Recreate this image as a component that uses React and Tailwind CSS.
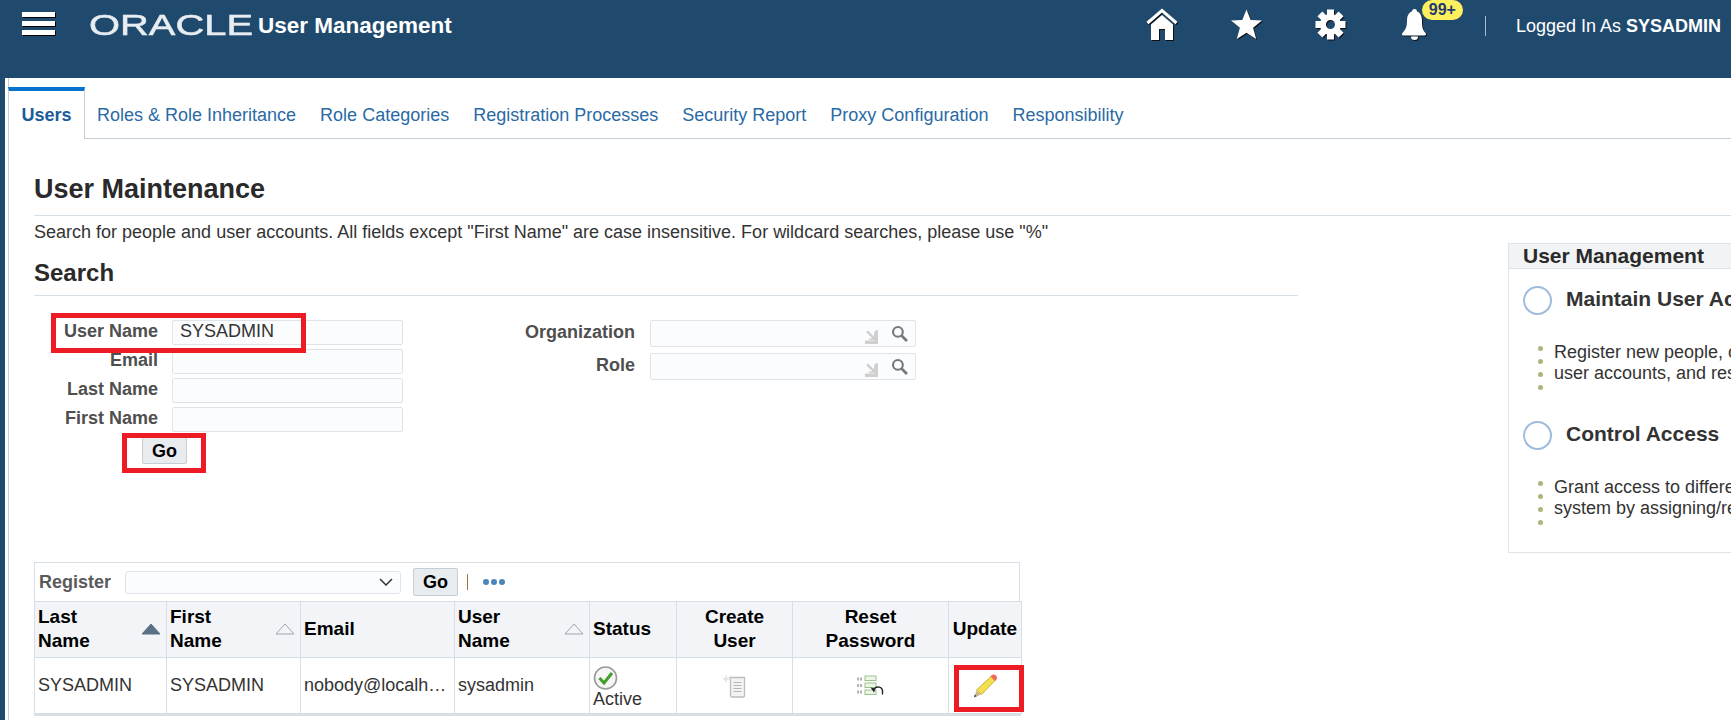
import React from "react";

const tabs = ["Roles & Role Inheritance", "Role Categories", "Registration Processes", "Security Report", "Proxy Configuration", "Responsibility"];

function HomeIcon() {
  return (
    <svg width="32" height="33" viewBox="0 0 32 33" className="drop-shadow-[1px_1px_0_#111]">
      <path d="M1.500 15L16 2.500 30.500 15" fill="none" stroke="#fff" strokeWidth="3" />
      <path d="M5 16.500L16 7l11 9.500V32h-8V21h-6v11H5z" fill="#fff" />
    </svg>
  );
}

function StarIcon() {
  return (
    <svg width="31" height="31" viewBox="0 0 31 31" className="drop-shadow-[1px_1px_0_#111]">
      <path d="M15.500 0.500l4.200 10.500 11.300 0.500-8.900 7.200 3.100 11.300-9.700-6.300-9.700 6.300 3.100-11.300L0 11.500l11.300-0.500z" fill="#fff" />
    </svg>
  );
}

function GearIcon() {
  return (
    <svg width="31" height="31" viewBox="0 0 31 31" className="drop-shadow-[1px_1px_0_#111]">
      <circle cx="15.500" cy="15.500" r="7.500" fill="none" stroke="#fff" strokeWidth="6" />
      {[0, 45, 90, 135, 180, 225, 270, 315].map((a) => (
        <rect key={a} x="12" y="0.500" width="7" height="6" fill="#fff" transform={`rotate(${a} 15.500 15.500)`} />
      ))}
    </svg>
  );
}

function BellIcon() {
  return (
    <svg width="27" height="31" viewBox="0 0 27 31" className="drop-shadow-[1px_1px_0_#111]">
      <circle cx="13.500" cy="2.500" r="2.500" fill="#fff" />
      <path d="M13.500 2C8 2 6 6.500 6 12c0 6-1.500 8.500-4.500 12-1 1.500-.5 2.500 1 2.500h21c1.500 0 2-1 1-2.500C21.500 20.500 21 18 21 12c0-5.500-2-10-7.500-10z" fill="#fff" />
      <path d="M10 27.500a3.500 3.500 0 0 0 7 0z" fill="#fff" />
    </svg>
  );
}

function SearchIcon() {
  return (
    <svg width="17" height="17" viewBox="0 0 16 16" fill="none" stroke="#777" strokeWidth="2">
      <circle cx="6.500" cy="6.500" r="4.600" />
      <path d="M10 10l5 5" strokeWidth="2.600" />
    </svg>
  );
}

function LovArrow() {
  return (
    <svg width="14" height="14" viewBox="0 0 14 14" fill="#cfcfcf">
      <path d="M0 10.500h9.500V1l3.500-1v14H0z" />
      <path d="M1 2l2-1.500 6 6V3.500h1.500V10H4V8.500h3.500z" />
    </svg>
  );
}

function Field({ label, value }) {
  return (
    <div className="flex items-center h-[29px]">
      <label className="w-[124px] -mt-[2px] text-right font-bold text-[18px] text-[#4f4f4f] whitespace-nowrap">{label}</label>
      <div className="ml-[14px] w-[231px] h-[25px] rounded-[2px] border border-[#dfe4ea] bg-[#fbfcfe] pl-[7px] text-[18px] leading-[21px] text-[#333]">{value}</div>
    </div>
  );
}

function LovField({ label }) {
  return (
    <div className="flex items-center h-[33px]">
      <label className="w-[139px] -mt-[2px] text-right font-bold text-[18px] text-[#4f4f4f]">{label}</label>
      <div className="ml-[15px] w-[266px] h-[27px] rounded-[2px] border border-[#dfe4ea] bg-[#fbfcfe] flex items-center justify-end gap-[12px] pr-[7px]">
        <span className="mt-[7px] flex"><LovArrow /></span>
        <SearchIcon />
      </div>
    </div>
  );
}

function SortUp({ filled }) {
  return (
    <svg width="20" height="12" viewBox="0 0 20 12" className="shrink-0">
      <path d="M10 1L19 11H1z" fill={filled ? "#5a7087" : "#f2f4f8"} stroke={filled ? "#5a7087" : "#9aa7b2"} strokeWidth="1" />
    </svg>
  );
}

function CheckIcon() {
  return (
    <svg width="25" height="24" viewBox="0 0 25 24">
      <circle cx="12.500" cy="12" r="11" fill="#f6f6f6" stroke="#9a9a9a" strokeWidth="1.600" />
      <path d="M6.500 12l4.500 5 8-10" fill="none" stroke="#3f9e2a" strokeWidth="3" />
    </svg>
  );
}

function CreateIcon() {
  return (
    <svg width="25" height="25" viewBox="0 0 25 25" fill="none">
      <path d="M4 1.500l1.300 3 3 1.200-3 1.300L4 10 2.800 7 0 5.700l3-1.200z" fill="#e4e4e4" />
      <path d="M8 4.500h14.500v18.500a1 1 0 0 1-1 1H10a1.500 1.500 0 0 1-1.500-1.500V8z" fill="#f3f3f3" stroke="#bdbdbd" strokeWidth="1.300" />
      <path d="M11.500 9.500h8M11.500 12.500h8M11.500 15.500h8M11.500 18.500h8" stroke="#b5b5b5" strokeWidth="1.200" />
    </svg>
  );
}

function ResetIcon() {
  return (
    <svg width="27" height="22" viewBox="0 0 27 22" fill="none">
      <path d="M1 2.500v3M4 2.500v3M1 9v3M4 9v3M1 15.500v3M4 15.500v3" stroke="#8a8a8a" strokeWidth="1.300" />
      <rect x="8" y="1" width="11" height="4.500" fill="#eef5e6" stroke="#9cc08a" />
      <rect x="8" y="8" width="11" height="4.500" fill="#eef5e6" stroke="#9cc08a" />
      <rect x="8" y="15" width="11" height="4.500" fill="#eef5e6" stroke="#9cc08a" />
      <path d="M17 14.500a4.500 4.500 0 0 1 8.500 2.500v2.500" stroke="#222" strokeWidth="1.400" />
      <path d="M13.500 12.500l5 1-1.500 4z" fill="#222" />
    </svg>
  );
}

function PencilIcon() {
  return (
    <svg width="25" height="25" viewBox="0 0 25 25">
      <path d="M18.500 3l4 4L8.500 21.500 3.500 17z" fill="#f4e04d" stroke="#b8a32c" strokeWidth="0.800" />
      <path d="M18.500 2.500a2.800 2.800 0 0 1 4.500 4.500l-1 1-4.500-4.500z" fill="#ee6a5a" />
      <path d="M3.500 17.500l4.500 4-7 3z" fill="#c9b98a" />
      <path d="M1.800 21.500l2 1.700-2.800 1z" fill="#444" />
    </svg>
  );
}

function Th({ children, className = "" }) {
  return <th className={"border border-[#d6dfe6] bg-[#f2f4f8] px-[3px] pb-[2px] text-[19px] leading-[24px] font-bold text-black align-middle " + className}>{children}</th>;
}

function Td({ children, className = "" }) {
  return <td className={"border border-[#d6dfe6] px-[3px] text-[18px] text-[#333] align-middle " + className}>{children}</td>;
}

function Bullets() {
  return (
    <div className="flex flex-col gap-[8px] pt-[4px] w-[5px] shrink-0">
      {[0, 1, 2, 3].map((i) => <span key={i} className="w-[5px] h-[5px] rounded-full bg-[#a9b77a]" />)}
    </div>
  );
}

function Section({ title, line1, line2, top }) {
  return (
    <div className={top}>
      <div className="flex items-center gap-[14px] pl-[14px]">
        <span className="w-[29px] h-[29px] rounded-full border-2 border-[#9dbcdc]" />
        <span className="font-bold text-[21px] leading-[24px] -mt-[4px] text-[#333] whitespace-nowrap">{title}</span>
      </div>
      <div className="flex gap-[11px] pl-[29px] mt-[27px]">
        <Bullets />
        <div className="text-[18px] leading-[21px] text-[#333] whitespace-nowrap">
          <div>{line1}</div>
          <div>{line2}</div>
        </div>
      </div>
    </div>
  );
}

export default function App() {
  return (
    <div className="w-[1731px] h-[720px] overflow-hidden flex flex-col bg-white font-['Liberation_Sans',Arial,sans-serif]">
      <header className="h-[78px] shrink-0 bg-[#1f4a6e] flex items-start text-white">
        <div className="ml-[22px] mt-[12px] w-[33px] flex flex-col gap-[4px]">
          <span className="h-[5px] bg-white shadow-[1px_1px_0_#000]" />
          <span className="h-[5px] bg-white shadow-[1px_1px_0_#000]" />
          <span className="h-[5px] bg-white shadow-[1px_1px_0_#000]" />
        </div>
        <span className="ml-[34px] mt-[8px] w-[163px] text-[29px] leading-[34px] text-[#e8edf2] origin-left scale-x-[1.375] whitespace-nowrap [-webkit-text-stroke:0.5px_#e8edf2]">ORACLE</span>
        <span className="ml-[6px] mt-[13px] font-bold text-[22.500px] leading-[26px] whitespace-nowrap">User Management</span>
        <div className="ml-auto flex items-start">
          <span className="mt-[8px] flex"><HomeIcon /></span>
          <span className="ml-[53px] mt-[9px] flex"><StarIcon /></span>
          <span className="ml-[53px] mt-[9px] flex"><GearIcon /></span>
          <div className="relative ml-[55px] mt-[9px] w-[27px] h-[31px]">
            <BellIcon />
            <span className="absolute left-[21px] top-[-9px] w-[41px] h-[20px] rounded-[10px] bg-[#fdf05e] text-[#1f3a6e] font-bold text-[16px] leading-[19px] text-center">99+</span>
          </div>
          <span className="ml-[57px] mt-[16px] w-px h-[20px] bg-[#a9bccd]" />
          <span className="ml-[30px] mt-[14px] text-[18px] leading-[24px] mr-[10px] whitespace-nowrap">Logged In As <b>SYSADMIN</b></span>
        </div>
      </header>
      <div className="flex-1 flex min-h-0">
        <div className="w-[5px] shrink-0 bg-[#1f4a6e]" />
        <div className="ml-[3px] flex-1 min-w-0 pt-[9px] border-l border-[#c4ced7]">
          <nav className="flex h-[52px] border-b border-[#c4ced7] text-[18px] text-[#2a6aa5]">
            <div className="w-[77px] h-[52px] -ml-px bg-white border-t-4 border-[#0572ce] border-x border-x-[#c4ced7] text-center font-bold text-[#1a5d99] leading-[48px]">Users</div>
            {tabs.map((t, i) => <div key={t} className={"leading-[56px] whitespace-nowrap " + (i === 0 ? "ml-[12px]" : "ml-[24px]")}>{t}</div>)}
          </nav>
          <div className="pl-[25px]">
            <h1 className="mt-[31px] h-[46px] border-b border-[#d6dfe6] font-bold text-[27px] leading-[38px] text-[#2a2a2a]">User Maintenance</h1>
            <p className="mt-[6px] text-[18px] leading-[20px] text-[#333] whitespace-nowrap">Search for people and user accounts. All fields except "First Name" are case insensitive. For wildcard searches, please use "%"</p>
            <div className="flex items-start">
              <div className="w-[1264px] shrink-0">
                <h2 className="mt-[18px] h-[36px] border-b border-[#d6dfe6] font-bold text-[24px] leading-[25px] text-[#2a2a2a]">Search</h2>
                <div className="relative flex mt-[22px]">
                  <div className="w-[369px]">
                    <Field label="User Name" value="SYSADMIN" />
                    <Field label="Email" />
                    <Field label="Last Name" />
                    <Field label="First Name" />
                    <button className="ml-[108px] mt-[3px] w-[45px] h-[27px] rounded-[2px] border border-[#c4ced7] bg-[#e9ecee] font-bold text-[18px] text-black">Go</button>
                  </div>
                  <div className="ml-[93px] mt-[-1px]">
                    <LovField label="Organization" />
                    <LovField label="Role" />
                  </div>
                  <span className="absolute left-[17px] top-[-5px] w-[255px] h-[40px] border-[5px] border-[#ed1c24]" />
                  <span className="absolute left-[88px] top-[115px] w-[84px] h-[40px] border-[5px] border-[#ed1c24]" />
                </div>
                <div className="relative mt-[98px] w-[990px]">
                  <div className="w-[986px] h-[39px] border border-[#d6dfe6] border-b-0 flex items-center pl-[4px]">
                    <span className="font-bold text-[18px] text-[#5a5a5a] w-[86px]">Register</span>
                    <div className="w-[276px] h-[23px] rounded-[3px] border border-[#dfe4ea] bg-[#fbfcfe] flex items-center justify-end pr-[7px]">
                      <svg width="14" height="8" viewBox="0 0 14 8" fill="none" stroke="#333" strokeWidth="1.500"><path d="M1 1l6 6 6-6" /></svg>
                    </div>
                    <button className="ml-[12px] w-[45px] h-[28px] rounded-[2px] border border-[#c4ced7] bg-[#e9ecee] font-bold text-[18px] text-black">Go</button>
                    <span className="ml-[9px] w-px h-[16px] bg-[#a8703a]" />
                    <div className="ml-[15px] flex gap-[2px]">
                      <span className="w-[6px] h-[6px] rounded-full bg-[#4a86b8]" />
                      <span className="w-[6px] h-[6px] rounded-full bg-[#4a86b8]" />
                      <span className="w-[6px] h-[6px] rounded-full bg-[#4a86b8]" />
                    </div>
                  </div>
                  <table className="table-fixed border-collapse w-[987px]">
                    <colgroup>
                      <col className="w-[132px]" /><col className="w-[134px]" /><col className="w-[154px]" /><col className="w-[135px]" /><col className="w-[87px]" /><col className="w-[116px]" /><col className="w-[156px]" /><col className="w-[73px]" />
                    </colgroup>
                    <thead>
                      <tr className="h-[56px]">
                        <Th className="text-left"><div className="flex items-center justify-between pr-[2px]"><span>Last<br />Name</span><SortUp filled /></div></Th>
                        <Th className="text-left"><div className="flex items-center justify-between pr-[2px]"><span>First<br />Name</span><SortUp /></div></Th>
                        <Th className="text-left">Email</Th>
                        <Th className="text-left"><div className="flex items-center justify-between pr-[2px]"><span>User<br />Name</span><SortUp /></div></Th>
                        <Th className="text-left">Status</Th>
                        <Th>Create<br />User</Th>
                        <Th>Reset<br />Password</Th>
                        <Th className="px-0">Update</Th>
                      </tr>
                    </thead>
                    <tbody>
                      <tr className="h-[56px]">
                        <Td>SYSADMIN</Td>
                        <Td>SYSADMIN</Td>
                        <Td className="text-[#2a6aa5] whitespace-nowrap overflow-hidden">nobody@localh…</Td>
                        <Td>sysadmin</Td>
                        <Td><div className="leading-[18px] pt-[2px]"><CheckIcon /><div>Active</div></div></Td>
                        <Td><div className="flex justify-center"><CreateIcon /></div></Td>
                        <Td><div className="flex justify-center"><ResetIcon /></div></Td>
                        <Td><div className="flex justify-center"><PencilIcon /></div></Td>
                      </tr>
                    </tbody>
                  </table>
                  <div className="w-[987px] h-[2px] bg-[#d6dfe6]" />
                  <span className="absolute left-[920px] top-[103px] w-[70px] h-[47px] border-[5px] border-[#ed1c24]" />
                </div>
              </div>
              <aside className="ml-[210px] mt-[1px] w-[420px] shrink-0 h-[310px] border border-[#dfe4ea]">
                <div className="h-[25px] bg-[#f2f3f4] border-b border-[#dfe4ea] pl-[14px] font-bold text-[21px] leading-[24px] text-[#2a2a2a]">User Management</div>
                <Section top="mt-[17px]" title="Maintain User Access" line1="Register new people, create" line2="user accounts, and reset" />
                <Section top="mt-[31px]" title="Control Access" line1="Grant access to different" line2="system by assigning/revoking" />
              </aside>
            </div>
          </div>
        </div>
      </div>
    </div>
  );
}
